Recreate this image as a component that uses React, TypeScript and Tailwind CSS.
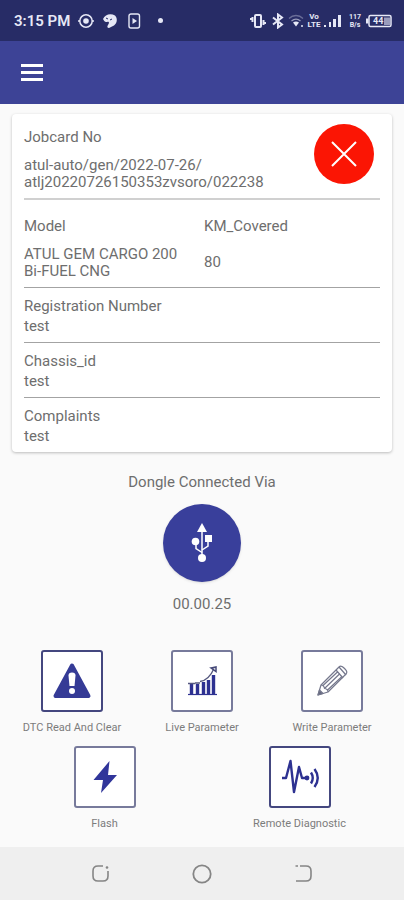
import type { ReactNode } from "react";

function StatusBar() {
  return (
    <div className="flex h-[41px] items-center justify-between bg-[#272c66] pr-3 pl-3.5 text-[#e6e8f6]">
      <div className="flex items-center">
        <span className="text-[15px] leading-5 font-semibold">3:15 PM</span>
        <svg className="ml-2 h-4 w-4" viewBox="0 0 16 16" fill="none" stroke="currentColor" strokeWidth="1.5" aria-hidden="true">
          <circle cx="8" cy="8" r="6.2" />
          <circle cx="8" cy="8" r="2.8" fill="currentColor" stroke="none" />
          <path d="M0 8h2M14 8h2" />
        </svg>
        <svg className="ml-2 h-4 w-4" viewBox="0 0 16 16" aria-hidden="true">
          <path fill="currentColor" d="M1 6C3 1 9 0 13 2.500c3 3 2 8-1 10l-5 2.500c-2 0-2-2-1-3l1-2c0-2-2-1-3-1C3 9 2 8 1 6Z" />
          <path d="M4 5l2 1M8 7l2-1" stroke="#272c66" strokeWidth="1" fill="none" />
        </svg>
        <svg className="ml-2 h-4 w-4" viewBox="0 0 16 16" fill="none" stroke="currentColor" strokeWidth="1.4" aria-hidden="true">
          <rect x="3" y="1" width="10.5" height="14" rx="2" />
          <path d="M6.500 5v6l4.500-3z" fill="currentColor" stroke="none" />
        </svg>
        <span className="ml-4 h-[5px] w-[5px] rounded-full bg-[#e6e8f6]" />
      </div>
      <div className="flex items-center">
        <svg className="h-4 w-4" viewBox="0 0 16 16" fill="none" stroke="currentColor" strokeWidth="2" aria-hidden="true">
          <rect x="5" y="2" width="6" height="12" rx="1" />
          <path d="M2.500 4v5M0.5 5v2M13.500 7v5M15.500 9v2" />
        </svg>
        <svg className="ml-1 h-4 w-4" viewBox="0 0 16 16" fill="none" stroke="currentColor" strokeWidth="2" aria-hidden="true">
          <path d="M3 4.500l9 7L8 14.500v-13l4 3-9 7" />
        </svg>
        <svg className="ml-0.5 h-4 w-4" viewBox="0 0 16 16" fill="none" stroke="currentColor" strokeWidth="1.3" aria-hidden="true">
          <path d="M1 5.500c4-4 10-4 14 0" opacity="0.35" />
          <path d="M3.500 8c3-2.500 6-2.500 9 0" opacity="0.6" />
          <path d="M5 9.500c2-1.500 4-1.500 6 0L8 13.500z" fill="currentColor" stroke="none" />
          <path d="M13 13h2" />
        </svg>
        <span className="ml-0.5 flex w-4 flex-col text-center text-[8px] leading-[8px] font-bold">
          <span>Vo</span>
          <span>LTE</span>
        </span>
        <svg className="ml-0.5 h-4 w-[18px]" viewBox="0 0 18 16" fill="currentColor" aria-hidden="true">
          <rect x="0" y="12" width="2" height="2" />
          <rect x="5" y="9" width="2" height="5" />
          <rect x="9" y="6" width="3" height="8" />
          <rect x="14" y="2" width="3" height="12" />
        </svg>
        <span className="ml-1.5 flex w-3.5 flex-col text-center text-[7px] leading-[8px] font-bold">
          <span>117</span>
          <span>B/s</span>
        </span>
        <svg className="ml-1 h-4 w-[26px]" viewBox="0 0 26 16" fill="none" stroke="currentColor" strokeWidth="1.5" aria-hidden="true">
          <rect x="3" y="2.500" width="22" height="11" rx="1.500" />
          <rect x="0" y="5.500" width="2.500" height="5" fill="currentColor" stroke="none" />
          <rect x="18" y="4.500" width="6" height="7.500" fill="currentColor" stroke="none" opacity="0.6" />
          <text x="7" y="11" fontSize="9" fontWeight="700" fill="currentColor" stroke="none">44</text>
        </svg>
      </div>
    </div>
  );
}

function Field({ label, value }: { label: string; value: string }) {
  return (
    <div className="border-t border-[#a3a3a3] pt-2 pb-[6px]">
      <dt className="leading-5">{label}</dt>
      <dd className="leading-5">{value}</dd>
    </div>
  );
}

function Action({ label, strong = false, children }: { label: string; strong?: boolean; children: ReactNode }) {
  return (
    <button type="button" className="flex flex-col items-center">
      <span
        className={
          "flex h-[62px] w-[62px] items-center justify-center rounded-[3px] border-2 bg-white text-[#2d3191] " +
          (strong ? "border-[#44477f]" : "border-[#777a9b]")
        }
      >
        {children}
      </span>
      <span className="mt-2 text-[11px] leading-4 whitespace-nowrap text-[#7c7c7c]">{label}</span>
    </button>
  );
}

function WarningIcon() {
  return (
    <svg className="h-10 w-10" viewBox="0 0 40 40" aria-hidden="true">
      <path d="M20 4.500 36.500 35h-33z" fill="#353b96" stroke="#353b96" strokeWidth="4" strokeLinejoin="round" />
      <path d="M16.500 14.500q0-3 3.500-3t3.500 3L22.500 25h-5z" fill="#fff" />
      <circle cx="20" cy="30" r="3" fill="#fff" />
    </svg>
  );
}

function ChartIcon() {
  return (
    <svg className="h-10 w-10" viewBox="0 0 40 40" fill="none" stroke="currentColor" aria-hidden="true">
      <path d="M6 33.500h29" strokeWidth="1.200" />
      <path d="M9.500 33V23M15.500 33V23M21.500 33V21M26.500 33V19M31.500 33V14" strokeWidth="3.400" />
      <path d="M6 22.500h7M13 22h5M18 20.500c7-1 11-6 14-13" strokeWidth="1.300" stroke="#55587f" />
      <path d="M29 7l5-1 0 4.500z" strokeWidth="1.500" stroke="#454878" />
    </svg>
  );
}

function PencilIcon() {
  return (
    <svg className="h-10 w-10" viewBox="0 0 40 40" fill="none" stroke="#74778c" strokeWidth="1.200" strokeLinejoin="round" aria-hidden="true">
      <path d="M6 34l3-10L27 6q2-2 5 1l1 1q3 3 1 5L16 31z" />
      <path d="M9 24q3 0 3.500 3.500Q16 28 16 31M24 9l7 8M27 6l7 8M12.500 27.500 28 12.500M10.500 25 26 10.500M15 29.500l15-14" />
      <path d="M6 34l1.500-5 3.500 3.500z" fill="#666980" />
    </svg>
  );
}

function BoltIcon() {
  return (
    <svg className="h-10 w-10" viewBox="0 0 40 40" aria-hidden="true">
      <path d="M24.500 4 8.500 23H18l-2 13L32 18h-9z" fill="#30359a" />
    </svg>
  );
}

function PulseIcon() {
  return (
    <svg className="h-10 w-10" viewBox="0 0 40 40" fill="none" stroke="currentColor" aria-hidden="true">
      <path d="M2 21h4L10.500 4l3.500 31L19 10l3 11h4" strokeWidth="2.400" strokeLinejoin="round" />
      <circle cx="27" cy="21" r="2.400" fill="currentColor" stroke="none" />
      <path d="M31 15.500q3.500 5.500 0 11M34.500 12q6.500 9 0 18" strokeWidth="2.400" />
    </svg>
  );
}

function UsbIcon() {
  return (
    <svg className="h-10 w-10" viewBox="0 0 40 40" fill="none" stroke="#fff" aria-hidden="true">
      <path d="M20 7v27" strokeWidth="1.500" />
      <path d="M14 18v7.500l6 4M26 15.500V23l-6 4" strokeWidth="1.500" />
      <path d="M20 0l5 9H15z" fill="#fff" stroke="none" />
      <circle cx="13.500" cy="18.500" r="3.800" fill="#fff" stroke="none" />
      <rect x="23" y="12" width="7" height="7" fill="#fff" stroke="none" />
      <circle cx="20" cy="35" r="4" fill="#fff" stroke="none" />
    </svg>
  );
}

export default function App() {
  return (
    <div className="flex min-h-screen flex-col bg-[#fafafa] font-[Roboto,sans-serif] text-[#6e6e6e]">
      <StatusBar />
      <header className="flex h-[63px] items-center bg-[#3d4396] px-5">
        <button type="button" aria-label="Open menu" className="flex h-6 w-6 flex-col items-center justify-center gap-1">
          <span className="h-[3px] w-[22px] bg-white" />
          <span className="h-[3px] w-[22px] bg-white" />
          <span className="h-[3px] w-[22px] bg-white" />
        </button>
      </header>

      <main className="flex flex-1 flex-col">
        <section className="mx-3 mt-2.5 rounded-sm bg-white px-3 shadow-[0_1px_3px_rgba(0,0,0,0.25)]">
          <div className="flex justify-between pt-2.5 pb-[7px] text-[15px]">
            <div className="min-w-0 pt-[3px]">
              <h2 className="leading-5">Jobcard No</h2>
              <p className="mt-2.5 leading-[17px]">
                atul-auto/gen/2022-07-26/
                <br />
                atlj20220726150353zvsoro/022238
              </p>
            </div>
            <button
              type="button"
              aria-label="Close job card"
              className="mr-1.5 flex h-[60px] w-[60px] shrink-0 items-center justify-center rounded-full bg-[#fb1504]"
            >
              <svg className="h-7 w-7" viewBox="0 0 28 28" stroke="#fff" strokeWidth="2" aria-hidden="true">
                <path d="M2 2l24 24M26 2 2 26" />
              </svg>
            </button>
          </div>
          <dl className="text-[15px]">
            <div className="grid grid-cols-2 gap-x-1 border-t-2 border-[#d0d0d0] pt-4 pb-[7px]">
              <div>
                <dt className="leading-5">Model</dt>
                <dd className="mt-2.5 leading-[17px]">
                  ATUL GEM CARGO 200
                  <br />
                  Bi-FUEL CNG
                </dd>
              </div>
              <div>
                <dt className="leading-5">KM_Covered</dt>
                <dd className="mt-[18px] leading-[17px]">80</dd>
              </div>
            </div>
            <Field label="Registration Number" value="test" />
            <Field label="Chassis_id" value="test" />
            <Field label="Complaints" value="test" />
          </dl>
        </section>

        <section className="mt-5 flex flex-col items-center text-[15px]">
          <h2 className="leading-5">Dongle Connected Via</h2>
          <button
            type="button"
            aria-label="USB connection"
            className="mt-3 flex h-[78px] w-[78px] items-center justify-center rounded-full bg-[#393f9b] shadow-sm"
          >
            <UsbIcon />
          </button>
          <p className="mt-3 leading-5">00.00.25</p>
        </section>

        <section className="mt-9 px-[7px]">
          <div className="grid grid-cols-3">
            <Action label="DTC Read And Clear" strong><WarningIcon /></Action>
            <Action label="Live Parameter"><ChartIcon /></Action>
            <Action label="Write Parameter"><PencilIcon /></Action>
          </div>
          <div className="mt-2.5 grid grid-cols-2">
            <Action label="Flash"><BoltIcon /></Action>
            <Action label="Remote Diagnostic" strong><PulseIcon /></Action>
          </div>
        </section>
      </main>

      <nav className="flex h-[53px] items-center justify-center gap-[81px] bg-[#efefef] text-[#858585]">
        <button type="button" aria-label="Recent apps">
          <svg className="h-5 w-5" viewBox="0 0 20 20" fill="none" stroke="currentColor" strokeWidth="1.600" aria-hidden="true">
            <path d="M12 2H7Q2 2 2 7v5q0 5 5 5h5q5 0 5-5V7" />
            <circle cx="16" cy="3.500" r="1.300" fill="currentColor" stroke="none" />
          </svg>
        </button>
        <button type="button" aria-label="Home">
          <svg className="h-5 w-5" viewBox="0 0 20 20" fill="none" stroke="currentColor" strokeWidth="1.800" aria-hidden="true">
            <circle cx="10" cy="10" r="8.700" />
          </svg>
        </button>
        <button type="button" aria-label="Back">
          <svg className="h-5 w-5" viewBox="0 0 20 20" fill="none" stroke="currentColor" strokeWidth="1.600" aria-hidden="true">
            <path d="M7 2h6q5 0 5 5v5q0 5-5 5H3M2.500 2H5" />
          </svg>
        </button>
      </nav>
    </div>
  );
}
